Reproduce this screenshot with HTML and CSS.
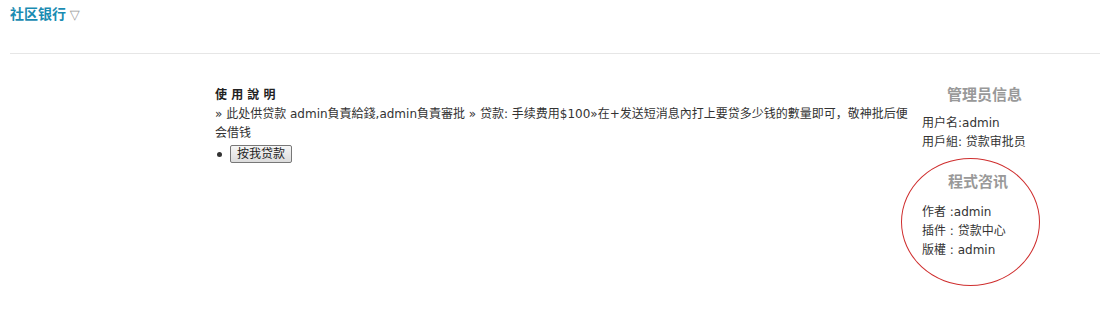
FILE: index.html
```html
<!DOCTYPE html>
<html>
<head>
<meta charset="utf-8">
<link rel="stylesheet" href="styles.css">
</head>
<body>
<div class="header">
  <a class="brand" href="#">社区银行</a> <span class="caret">▽</span>
</div>
<div class="main">
  <div class="content">
    <div class="ctitle">使 用 說 明</div>
    <div class="ctext">» 此处供贷款 admin負責給錢,admin負責審批 » 贷款: 手续费用$100»在+发送短消息內打上要贷多少钱的數量即可，敬神批后便会借钱</div>
    <ul class="actions">
      <li><button class="btn">按我贷款</button></li>
    </ul>
  </div>
  <div class="side">
    <div class="shead">管理员信息</div>
    <div class="sline">用户名:admin</div>
    <div class="sline">用戶組: 贷款审批员</div>
    <div class="shead shead2">程式咨讯</div>
    <div class="sline">作者 :admin</div>
    <div class="sline">插件 : 贷款中心</div>
    <div class="sline">版權 : admin</div>
    <div class="ring"></div>
  </div>
</div>
</body>
</html>
```
FILE: styles.css
```css
html, body {
  margin: 0;
  padding: 0;
  background: #fff;
}
body {
  font-family: "DejaVu Sans", Verdana, "Noto Sans CJK SC", sans-serif;
  font-size: 12px;
  color: #333;
  min-height: 314px;
}
.header {
  margin: 0 0 0 10px;
  padding-top: 3px;
  border-bottom: 1px solid #e6e6e6;
  box-sizing: border-box;
  height: 54px;
}
.brand {
  font-weight: bold;
  font-size: 14px;
  color: #1a8cb2;
  text-decoration: none;
}
.caret {
  color: #999;
  font-size: 13px;
}
.main {
  display: flex;
  padding-left: 215px;
  padding-top: 32px;
  padding-bottom: 40px;
}
.content {
  width: 700px;
  line-height: 19px;
}
.ctitle {
  font-weight: bold;
  color: #222;
}
.ctext {
  color: #333;
}
.actions {
  margin: 2px 0 0 0;
  padding: 0 0 0 2px;
  list-style: none;
}
.actions li {
  display: flex;
  align-items: center;
  gap: 8px;
}
.actions li::before {
  content: "";
  width: 5px;
  height: 5px;
  border-radius: 50%;
  background: #333;
}
.btn {
  font-family: inherit;
  font-size: 12px;
  color: #222;
  padding: 0 6px;
  height: 18px;
  line-height: 14px;
  border: 1px solid #777;
  border-radius: 2px;
  background: linear-gradient(#f6f6f6, #dcdcdc);
}
.side {
  position: relative;
  width: 120px;
  margin-left: 7px;
  line-height: 19px;
}
.shead {
  font-weight: bold;
  font-size: 15px;
  color: #999;
  padding-left: 25px;
  margin-bottom: 9px;
}
.shead2 {
  margin-top: 21px;
  padding-left: 26px;
  margin-bottom: 11px;
}
.sline {
  color: #333;
}
.ring {
  position: absolute;
  left: -21px;
  top: 72px;
  width: 137px;
  height: 126px;
  border: 1.5px solid #cf2e2e;
  border-radius: 50%;
}
```
